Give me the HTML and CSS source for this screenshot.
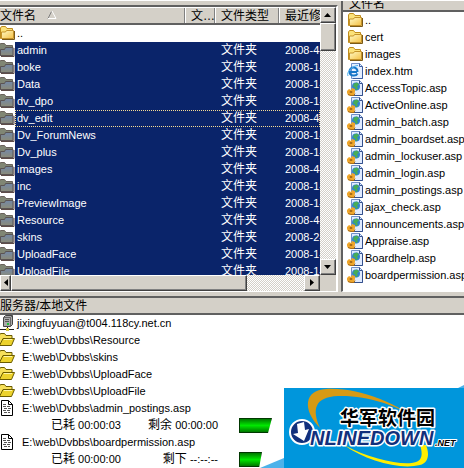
FILE: index.html
```html
<!DOCTYPE html>
<html lang="zh-CN">
<head>
    <meta charset="UTF-8">
    <title>FTP</title>
    <link rel="stylesheet" href="styles.css">
</head>
<body>
<svg class="defs" aria-hidden="true">
    <defs>
        <linearGradient id="gold" x1="0" y1="0" x2="1" y2="1">
            <stop offset="0" stop-color="#fffbc8"/>
            <stop offset="1" stop-color="#f4c044"/>
        </linearGradient>
        <linearGradient id="slate" x1="0" y1="0" x2="0" y2="1">
            <stop offset="0" stop-color="#7388a8"/>
            <stop offset="1" stop-color="#8c8c78"/>
        </linearGradient>
    </defs>
    <symbol id="folder" viewBox="0 0 16 16">
        <path d="M1.500 13.500V3l1-1.500h4l1.500 2h5.500v10z" fill="#fbe27a" stroke="#c08c1c"/>
        <path d="M2.500 13.500v-6.500h4l1-1.500h7v8z" fill="url(#gold)" stroke="#c4922a"/>
        <path d="M3 14.500h12.500V6" fill="none" stroke="#7a5a18"/>
    </symbol>
    <symbol id="folder-sel" viewBox="0 0 16 16">
        <path d="M.5 13.500V3l1-1.500h4l1.500 2h6.500v10z" fill="#808674" stroke="#6a625c"/>
        <path d="M1.500 13.500v-6h4l1-2h7.500v8z" fill="url(#slate)" stroke="#5b5454"/>
        <path d="M2 14.500h13V6" fill="none" stroke="#5e4c48"/>
    </symbol>
    <symbol id="ie" viewBox="0 0 16 16">
        <path d="M4.500 .5h8l3 3v12h-11z" fill="#e4efff" stroke="#6f8fc8"/>
        <path d="M12.500 .5v3h3M15.500 4v11.500H6" fill="none" stroke="#3c5ea0"/>
        <path d="M10 9H3M10.500 9C10.500 3 2.500 3 2.500 8.500c0 5 6.500 5 8 2" fill="none" stroke="#1877c8" stroke-width="2"/>
        <path d="M1 13C-1 9 6 2.500 11 2.500" fill="none" stroke="#4ab0ee"/>
    </symbol>
    <symbol id="asp" viewBox="0 0 16 16">
        <path d="M4.500 .5h8l3 3v12h-11z" fill="#e0ebff" stroke="#6f8fc8"/>
        <path d="M12.500 .5v3h3M15.500 4v11.500H6" fill="none" stroke="#34508c"/>
        <circle cx="9" cy="6.500" r="4" fill="#2f83d0"/>
        <path d="M7 3.500l3-1 2 2-2 2 1 2-2 2-1-3-2-1z" fill="#48ad58"/>
        <path d="M0 11l2-2 2 1 1-2 3 1v3l-1 3-3 1-3-1-1-2z" fill="#efa62b"/>
        <path d="M3 11.500h2v1H3zM1 14.500l3 1h3l1-2" fill="none" stroke="#a86c18"/>
    </symbol>
    <symbol id="open" viewBox="0 0 16 16">
        <path d="M.5 13.500V3l1-1.500h4l1.500 2h6v3" fill="#f6e05a" stroke="#6b5c00"/>
        <path d="M.5 13.500L4 6.500h11.500l-3 7z" fill="#ecd22c" stroke="#6b5c00"/>
        <path d="M5 7.500h8" stroke="#fff6a8"/>
    </symbol>
    <symbol id="doc" viewBox="0 0 16 16">
        <path d="M2.500 .5h7l4 4v11h-11z" fill="#fff" stroke="#000"/>
        <path d="M9.500 .5v4h4" fill="none" stroke="#000"/>
        <path d="M4 4.500h4M4 6.500h7M5 8.500h7M4 10.500h7M5 12.500h6" stroke="#555" stroke-dasharray="3 1"/>
    </symbol>
    <symbol id="server" viewBox="0 0 16 16">
        <path d="M4.500 2.500l2-2h7v9l-2 2h-7z" fill="#a9a9a9" stroke="#444"/>
        <path d="M4.500 2.500h7v9M11.500 2.500l2-2" fill="none" stroke="#666"/>
        <path d="M6 4.500h4M6 6.500h4" stroke="#555"/>
        <path d="M8 8h2v2H8z" fill="#19c43a"/>
        <path d="M1 14.500h14M8.500 12v2" stroke="#222"/>
        <path d="M7 13h3v3H7z" fill="#d8c83c"/>
    </symbol>
</svg>

<main class="app">
    <div class="top">
        <section class="pane remote">
            <div class="remote-view">
                <div class="head remote-cols">
                    <span class="col">文件名 <svg class="sort" viewBox="0 0 10 10"><path d="M1 8.500L4.500 1.500" stroke="#808080" fill="none"/><path d="M5 1l4 7.500H1" stroke="#fff" fill="none"/></svg></span>
                    <span class="col">文…</span>
                    <span class="col">文件类型</span>
                    <span class="col">最近修</span>
                </div>
                <ul class="list" id="remoteList">
                    <li class="remote-row"><svg class="icon"><use href="#folder"/></svg><span class="cells"><span>..</span></span></li>
                </ul>
            </div>
            <div class="vbar">
                <button class="btn" aria-label="向上"><svg viewBox="0 0 8 8"><path d="M0 6h7L3.500 2z"/></svg></button>
                <div class="thumb vthumb"></div>
                <button class="btn end" aria-label="向下"><svg viewBox="0 0 8 8"><path d="M0 2h7L3.500 6z"/></svg></button>
            </div>
            <div class="hbar">
                <button class="btn cut" aria-label="向左"><svg viewBox="0 0 8 8"><path d="M6 0v7L2 3.500z"/></svg></button>
                <div class="thumb hthumb"></div>
                <button class="btn end" aria-label="向右"><svg viewBox="0 0 8 8"><path d="M2 0v7l4-3.500z"/></svg></button>
            </div>
        </section>
        <section class="pane local">
            <div class="head local-head">文件名</div>
            <ul class="list" id="localList"></ul>
        </section>
    </div>

    <section class="queue">
        <div class="head queue-head">服务器/本地文件</div>
        <ul class="list">
            <li class="row"><svg class="icon"><use href="#server"/></svg><span>jixingfuyuan@t004.118cy.net.cn</span></li>
            <li class="row item"><svg class="icon"><use href="#open"/></svg><span>E:\web\Dvbbs\Resource</span></li>
            <li class="row item"><svg class="icon"><use href="#open"/></svg><span>E:\web\Dvbbs\skins</span></li>
            <li class="row item"><svg class="icon"><use href="#open"/></svg><span>E:\web\Dvbbs\UploadFace</span></li>
            <li class="row item"><svg class="icon"><use href="#open"/></svg><span>E:\web\Dvbbs\UploadFile</span></li>
            <li class="row item"><svg class="icon"><use href="#doc"/></svg><span>E:\web\Dvbbs\admin_postings.asp</span></li>
            <li class="status"><span><b>已耗</b> 00:00:03</span><span class="left"><b>剩余</b> 00:00:00</span><span class="progress"></span></li>
            <li class="row item"><svg class="icon"><use href="#doc"/></svg><span>E:\web\Dvbbs\boardpermission.asp</span></li>
            <li class="status"><span><b>已耗</b> 00:00:00</span><span class="left"><b>剩下</b> --:--:--</span><span class="progress short"></span></li>
        </ul>
        <svg class="logo" viewBox="0 0 204 82" role="img" aria-label="华军软件园 ONLINEDOWN.NET">
            <path d="M24 2h180v80H24z" fill="#0096dc"/>
            <path d="M0 82l24-10v10z" fill="#4cb2ea"/>
            <path d="M198 2l6-3v3z" fill="#4cb2ea"/>
            <path d="M60 42C42 24 44 4 66 3c32-2 72 14 98 36C140 18 104 9 78 10 54 11 52 24 60 42z" fill="#d69a14"/>
            <path d="M84 59c28 15 60 21 72 17 6-2 7-8 4-17h6c4 10 2 18-6 20-20 5-54-4-76-20z" fill="#ffee00"/>
            <text class="logo-cn" x="80" y="39">华军软件园</text>
            <ellipse cx="42" cy="46" rx="12" ry="12" fill="#12307c" stroke="#fff" stroke-width="2"/>
            <text class="logo-en" x="50" y="59">NLINEDOWN</text>
            <path d="M37 38l7-2 1 8 4-1-5 12-11-7 5-1z" fill="#fff"/>
            <text class="logo-net" x="175" y="60">.NET</text>
        </svg>
    </section>
</main>

<script>
const folders = [
    ["admin", "2008-4-"], ["boke", "2008-1-"], ["Data", "2008-1-"], ["dv_dpo", "2008-1-"],
    ["dv_edit", "2008-4-"], ["Dv_ForumNews", "2008-1-"], ["Dv_plus", "2008-1-"], ["images", "2008-4-"],
    ["inc", "2008-1-"], ["PreviewImage", "2008-1-"], ["Resource", "2008-4-"], ["skins", "2008-2-"],
    ["UploadFace", "2008-1-"], ["UploadFile", "2008-1-"]
];
const files = [
    ["..", "folder"], ["cert", "folder"], ["images", "folder"], ["index.htm", "ie"],
    ["AccessTopic.asp", "asp"], ["ActiveOnline.asp", "asp"], ["admin_batch.asp", "asp"],
    ["admin_boardset.asp", "asp"], ["admin_lockuser.asp", "asp"], ["admin_login.asp", "asp"],
    ["admin_postings.asp", "asp"], ["ajax_check.asp", "asp"], ["announcements.asp", "asp"],
    ["Appraise.asp", "asp"], ["Boardhelp.asp", "asp"], ["boardpermission.asp", "asp"]
];

document.getElementById("remoteList").innerHTML += folders.map(([name, date]) =>
    `<li class="remote-row selected${name === "dv_edit" ? " focused" : ""}">
        <svg class="icon"><use href="#folder-sel"/></svg>
        <span class="cells"><span>${name}</span><b>文件夹</b><span>${date}</span></span>
    </li>`).join("");

document.getElementById("localList").innerHTML = files.map(([name, icon]) =>
    `<li class="row"><svg class="icon"><use href="#${icon}"/></svg><span>${name}</span></li>`).join("");
</script>
</body>
</html>
```
FILE: styles.css
```css
* {
    box-sizing: border-box;
}
body {
    margin: 0;
    background: #d4d0c8;
    color: #000;
    font-family: "Liberation Sans", "Noto Sans CJK SC", sans-serif;
    font-size: 11px;
    line-height: 17px;
    overflow: hidden;
}
.defs {
    position: absolute;
    width: 0;
    height: 0;
}
.app {
    display: flex;
    flex-direction: column;
    min-height: 100vh;
    border-top: 1px solid #fff;
}
.top {
    display: grid;
    grid-template-columns: 338px 1fr;
    gap: 3px;
    height: 291px;
}
.list {
    list-style: none;
    margin: 0;
    padding: 0;
}
.icon {
    width: 16px;
    height: 16px;
    flex: none;
}
b {
    font-size: 12px;
    font-weight: normal;
}
.head {
    font-size: 12px;
    line-height: 16px;
    background: #d4d0c8;
    border-bottom: 2px solid #606060;
    white-space: nowrap;
    overflow: hidden;
}

/* left pane */
.remote {
    display: grid;
    grid-template-columns: 1fr 16px;
    grid-template-rows: 1fr 16px;
    margin-top: 4px;
    border-top: 2px solid #606060;
    border-right: 2px solid #fff;
    border-bottom: 1px solid #fff;
    min-height: 0;
}
.remote-view {
    background: #fff;
    overflow: hidden;
}
.remote-cols {
    display: grid;
    grid-template-columns: 185px 30px 64px 1fr;
    height: 18px;
    border-top: 1px solid #fff;
}
.col {
    padding-left: 5px;
    border-left: 1px solid #fff;
    border-right: 1px solid #808080;
    overflow: hidden;
}
.col:first-child {
    padding-left: 0;
    border-left: 0;
}
.col:last-child {
    border-right: 0;
}
.sort {
    width: 10px;
    height: 10px;
    margin-left: 8px;
}
.remote-row {
    display: grid;
    grid-template-columns: 15px 1fr;
    height: 17px;
}
.remote-row .icon {
    margin-left: -1px;
}
.cells {
    display: grid;
    grid-template-columns: 204px 64px 1fr;
    padding-left: 2px;
    white-space: nowrap;
    overflow: hidden;
}
.selected .cells {
    background: #0a246a;
    color: #fff;
}
.focused .cells {
    outline: 1px dotted #f5db95;
    outline-offset: -1px;
}

/* scroll bars */
.vbar, .hbar {
    display: flex;
    background: repeating-conic-gradient(#fff 0 25%, #d4d0c8 0 50%) 0 0 / 2px 2px;
}
.vbar {
    flex-direction: column;
}
.btn, .thumb {
    flex: none;
    background: #d4d0c8;
    border: 1px solid;
    border-color: #fff #404040 #404040 #fff;
    box-shadow: inset -1px -1px #808080;
}
.btn {
    display: flex;
    align-items: center;
    justify-content: center;
    width: 16px;
    height: 16px;
    padding: 0;
}
.btn svg {
    width: 8px;
    height: 8px;
}
.cut {
    width: 11px;
}
.end {
    margin-left: auto;
}
.vbar .end {
    margin: auto 0 0;
}
.vthumb {
    height: 28px;
}
.hthumb {
    width: 236px;
}

/* right pane */
.local {
    background: #fff;
    border-left: 2px solid #606060;
    border-bottom: 1px solid #fff;
    overflow: hidden;
}
.local-head {
    height: 11px;
    line-height: 6px;
    padding-left: 6px;
}
.row {
    display: flex;
    gap: 2px;
    height: 17px;
    white-space: nowrap;
}
.local .row {
    padding-left: 4px;
}

/* transfer queue */
.queue {
    position: relative;
    flex: 1;
    margin-top: 4px;
    background: #fff;
    border-top: 2px solid #606060;
}
.queue-head {
    height: 17px;
}
.queue .row .icon {
    margin-left: -1px;
}
.row.item {
    gap: 7px;
}
.status {
    display: grid;
    grid-template-columns: 77px 92px 1fr;
    align-items: center;
    height: 17px;
    padding-left: 51px;
    white-space: nowrap;
}
.left {
    text-align: right;
    padding-right: 2px;
}
.progress {
    width: 33px;
    height: 15px;
    margin-left: 19px;
    border: 1px solid #003800;
    background: linear-gradient(#007800, #00e800, #007800);
    clip-path: polygon(0 0, 100% 0, 88% 100%, 0 100%);
}
.short {
    width: 23px;
}
.logo {
    position: absolute;
    right: 0;
    bottom: 0;
    width: 204px;
    height: 82px;
    overflow: visible;
}
.logo text {
    paint-order: stroke;
    stroke: #fff;
    stroke-linejoin: round;
}
.logo-cn {
    font: bold 19px "Noto Sans CJK SC", sans-serif;
    stroke-width: 3px;
}
.logo-en {
    font: italic bold 20px "Liberation Sans", sans-serif;
    fill: #12307c;
    stroke-width: 3px;
}
.logo-net {
    font: italic bold 9px "Liberation Sans", sans-serif;
    stroke-width: 2px;
}
```
